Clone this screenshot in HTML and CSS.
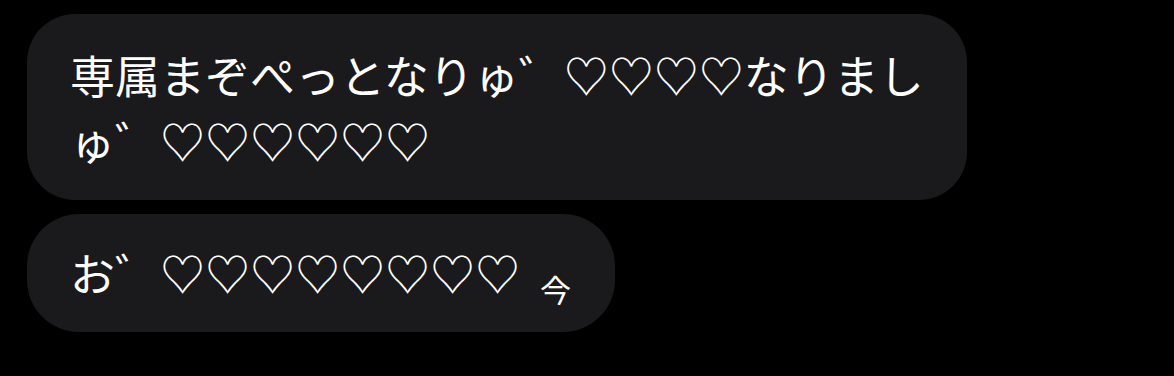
FILE: index.html
```html
<!DOCTYPE html>
<html lang="ja">
<head>
<meta charset="utf-8">
<link rel="stylesheet" href="styles.css">
</head>
<body>
<div class="thread">
  <div class="bubble bubble-long">専属まぞぺっとなりゅ゛♡♡♡♡なりましゅ゛♡♡♡♡♡♡</div>
  <div class="bubble bubble-short">お゛♡♡♡♡♡♡♡♡<span class="time">今</span></div>
</div>
</body>
</html>
```
FILE: styles.css
```css
html, body {
  margin: 0;
  padding: 0;
  background: #000;
}
.thread {
  display: flex;
  flex-direction: column;
  align-items: flex-start;
  gap: 14px;
  padding: 14px 0 0 27px;
}
.bubble {
  box-sizing: border-box;
  background: #1a1a1c;
  color: #fff;
  font-family: "Noto Sans CJK JP", "Noto Sans", sans-serif;
  font-size: 45px;
  line-height: 66px;
  border-radius: 48px;
  width: fit-content;
}
.bubble-long {
  max-width: 940px;
  padding: 28px 41px 26px 43px;
  height: 186px;
}
.bubble-short {
  padding: 26px 44px 26px 43px;
  height: 118px;
  border-radius: 52px;
  white-space: nowrap;
}
.time {
  font-size: 31px;
  margin-left: 20px;
  vertical-align: -10px;
}
```
